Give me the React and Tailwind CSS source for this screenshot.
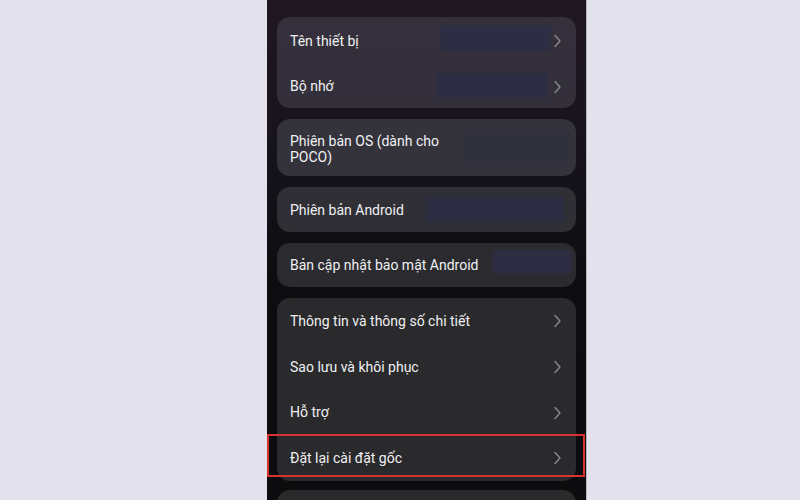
import React from "react";

function Chevron() {
  return (
    <svg width="9" height="14" viewBox="0 0 9 14" fill="none" className="shrink-0">
      <path d="M2 1.5L7 7L2 12.5" stroke="#8c8c92" strokeWidth="1.3" strokeLinecap="round" strokeLinejoin="round" />
    </svg>
  );
}

// blurred box that hides the real value
function Redact({ className }) {
  return <div className={"absolute rounded-[2px] bg-[#2d2e44] blur-[1px] " + className} />;
}

function Row({ label, arrow = true, children, highlight = false, h = "h-[45px]" }) {
  return (
    <div className={"relative flex items-center justify-between pl-[13px] pr-[14px] " + h}>
      <span className="text-[14px] leading-[17px] text-[#f0f0f3]">{label}</span>
      {arrow && <Chevron />}
      {children}
      {highlight && (
        <div className="absolute -left-[10px] -right-[9px] -top-[1px] bottom-[4px] border-2 border-[#d8322f]" />
      )}
    </div>
  );
}

export default function App() {
  return (
    <div className="w-[800px] h-[500px] overflow-hidden bg-[#e3e1eb] pl-[267px] font-['Roboto',sans-serif]">
      <div className="w-[320px] h-full overflow-hidden bg-[linear-gradient(180deg,#201722_0%,#17131c_30%,#0d0d10_55%,#0c0c0e_100%)] border-r border-[#b9b8c0] px-[10px] pt-[17px] flex flex-col gap-[11px]">
        {/* device card */}
        <div className="shrink-0 rounded-[13px] bg-[#3b3742]/80">
          <Row label="Tên thiết bị" h="h-[48px]">
            <Redact className="left-[163px] right-[25px] top-[8px] bottom-[14px]" />
          </Row>
          <Row label="Bộ nhớ" h="h-[43px]">
            <Redact className="left-[159px] right-[28px] top-[8px] bottom-[10px]" />
          </Row>
        </div>

        <div className="shrink-0 relative rounded-[13px] bg-[#34333c] h-[57px] flex items-center pl-[13px] pt-[2px]">
          <span className="text-[14px] leading-[16px] text-[#f0f0f3]">
            Phiên bản OS (dành cho
            <br />
            POCO)
          </span>
          <Redact className="left-[185px] right-[6px] top-[10px] bottom-[10px] opacity-30" />
        </div>

        <div className="shrink-0 relative rounded-[13px] bg-[#2f2f35] h-[45px] flex items-center pl-[13px] pt-[2px]">
          <span className="text-[14px] leading-[17px] text-[#f0f0f3]">Phiên bản Android</span>
          <Redact className="left-[149px] right-[12px] top-[10px] bottom-[10px]" />
        </div>

        <div className="shrink-0 relative rounded-[13px] bg-[#2b2b2f] h-[44px] flex items-center pl-[13px]">
          <span className="text-[14px] leading-[17px] text-[#f0f0f3]">Bản cập nhật bảo mật Android</span>
          <Redact className="left-[216px] right-[5px] top-[7px] bottom-[14px]" />
        </div>

        <div className="shrink-0 rounded-[13px] bg-[#2a2a2c]">
          <Row label="Thông tin và thông số chi tiết" h="h-[46px]" />
          <Row label="Sao lưu và khôi phục" h="h-[46px]" />
          <Row label="Hỗ trợ" h="h-[45px]" />
          <Row label="Đặt lại cài đặt gốc" h="h-[46px]" highlight />
        </div>

        <div className="shrink-0 -mt-[2px] rounded-[13px] bg-[#2a2a2c] h-[45px]" />
      </div>
    </div>
  );
}
